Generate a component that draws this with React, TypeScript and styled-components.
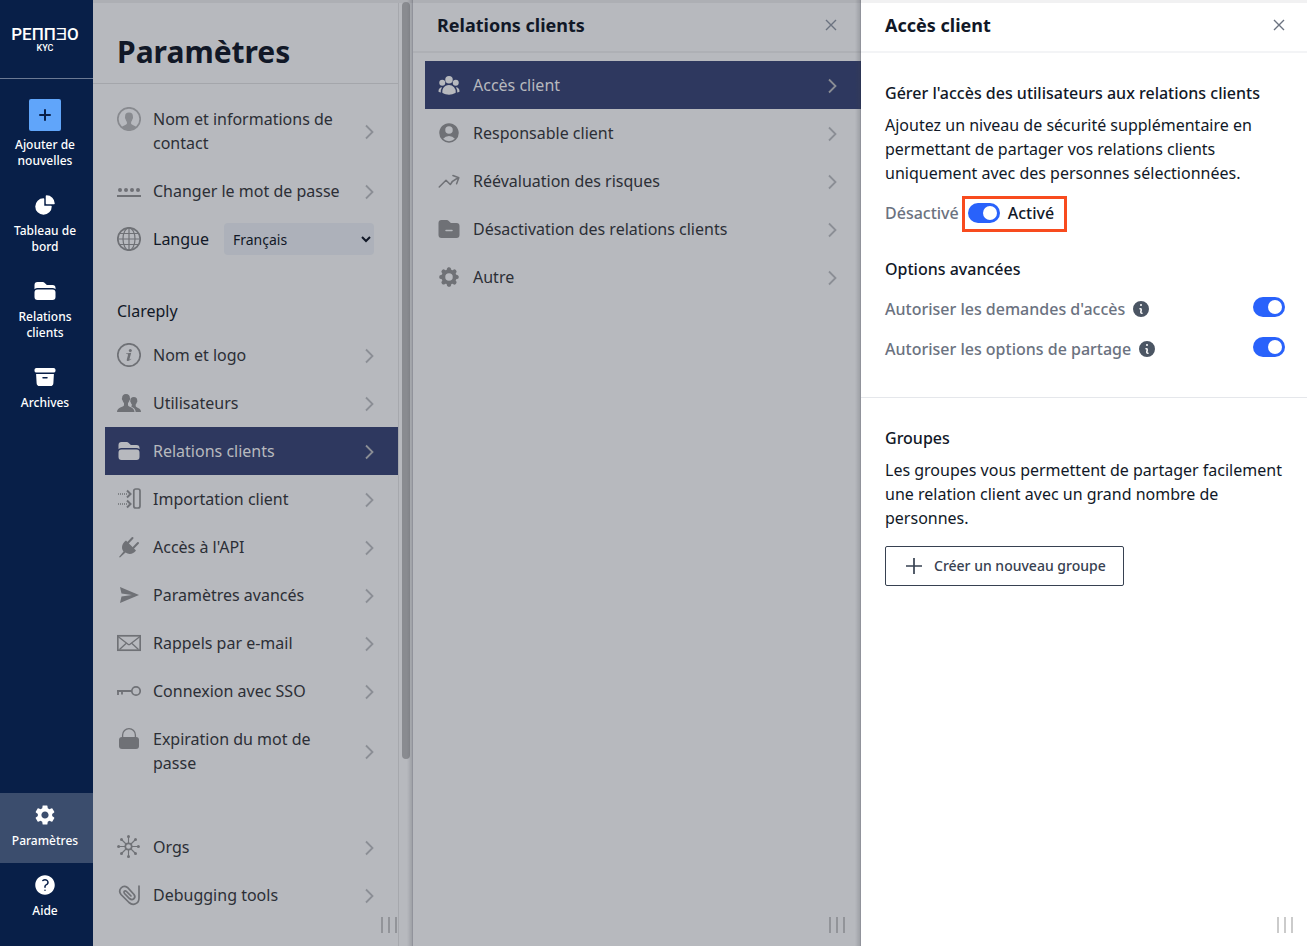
import React from "react";
import styled, { createGlobalStyle, css } from "styled-components";
import {
  HiArchiveBox,
  HiChartPie,
  HiCog8Tooth,
  HiFolder,
  HiFolderMinus,
  HiMiniInformationCircle,
  HiOutlineArrowTrendingUp,
  HiQuestionMarkCircle,
  HiUserCircle,
  HiUserGroup,
} from "react-icons/hi2";
import { MdSettings } from "react-icons/md";

const GlobalStyle = createGlobalStyle`
  *, *::before, *::after { box-sizing: border-box; }
  body { margin: 0; }
  h1, h2, h3, p, ul { margin: 0; padding: 0; }
  ul { list-style: none; }
  button, select, input { font: inherit; color: inherit; }
  body, #root { font-family: "Noto Sans", "Open Sans", sans-serif; font-size: 16px; line-height: 24px; color: #111827; }
`;

const Page = styled.div`
  display: flex;
  min-height: 100vh;
  background: #fff;
`;

/* Navigation bar */

const Sidebar = styled.nav`
  flex: 0 0 93px;
  display: flex;
  flex-direction: column;
  padding-bottom: 13px;
  background: #081f48;
  color: #fff;
`;

const Brand = styled.a`
  display: flex;
  flex-direction: column;
  align-items: center;
  height: 79px;
  padding: 25px 3px 0 0;
  border-bottom: 1px solid #6b7993;
  color: #fff;
  text-decoration: none;
`;

const Wordmark = styled.span`
  font: 500 17px/18px Roboto, sans-serif;
`;

const Product = styled.span`
  font: 500 9px/10px Roboto, sans-serif;
`;

const NavList = styled.ul<{ $end?: boolean }>`
  ${(p) => (p.$end ? "margin-top: auto;" : "padding-top: 8px;")}
`;

const NavLink = styled.a<{ $active?: boolean }>`
  display: flex;
  flex-direction: column;
  align-items: center;
  gap: 6px;
  padding: 10px 7px 14px 4px;
  font-size: 12px;
  line-height: 16px;
  font-weight: 500;
  text-align: center;
  text-decoration: none;
  color: #fff;
  background: ${(p) => (p.$active ? "#3b4d6d" : "transparent")};
`;

const NavIcon = styled.span`
  height: 24px;
  font-size: 24px;
  line-height: 0;
`;

const AddTile = styled.span`
  display: grid;
  place-items: center;
  width: 32px;
  height: 32px;
  margin-top: 2px;
  border-radius: 2px;
  background: #60a5fa;
  color: #081f48;
`;

/* Panels */

const Panel = styled.section<{ $width?: number; $dim?: boolean }>`
  position: relative;
  flex: ${(p) => (p.$width ? `0 0 ${p.$width}px` : "1 1 0")};
  min-width: 0;
  display: flex;
  flex-direction: column;
  border-top: 3px solid ${(p) => (p.$dim ? "#adafb4" : "#f1f1f2")};
  background: ${(p) => (p.$dim ? "#b7b9be" : "#fff")};
  ${(p) =>
    p.$dim &&
    css`
      &::after {
        content: "";
        position: absolute;
        inset: -3px 0 0 auto;
        width: 6px;
        border-right: 1px solid rgba(40, 44, 58, 0.25);
        background: linear-gradient(to right, rgba(60, 62, 70, 0), rgba(60, 62, 70, 0.2));
        pointer-events: none;
      }
    `}
`;

const PanelHeader = styled.header<{ $dim?: boolean }>`
  display: flex;
  align-items: center;
  justify-content: space-between;
  height: 50px;
  padding: 0 ${(p) => (p.$dim ? 24 : 22)}px 4px 24px;
  border-bottom: 2px solid ${(p) => (p.$dim ? "#aeb0b5" : "#f3f4f6")};
`;

const PanelTitle = styled.h2`
  font-size: 18px;
  line-height: 28px;
  font-weight: 700;
`;

const CloseButton = styled.button`
  display: grid;
  place-items: center;
  width: 12px;
  height: 24px;
  padding: 0;
  border: 0;
  background: none;
  color: #6b7280;
`;

const Grip = styled.span<{ $dim?: boolean }>`
  position: absolute;
  right: ${(p) => (p.$dim ? 16 : 14)}px;
  bottom: 13px;
  display: flex;
  gap: 5px;
  i {
    width: 2px;
    height: 16px;
    background: ${(p) => (p.$dim ? "#929499" : "#cbcbcb")};
  }
`;

const SettingsBody = styled.div`
  display: flex;
  flex: 1;
`;

const SettingsContent = styled.div`
  flex: 1;
  min-width: 0;
  border-right: 1px solid #a6a8ad;
`;

const ScrollTrack = styled.div`
  flex: 0 0 14px;
  padding-left: 3px;
`;

const ScrollThumb = styled.div`
  width: 8px;
  height: 80vh;
  margin-top: -1px;
  border-radius: 4px;
  background: #898b90;
`;

const TitleBar = styled.div`
  height: 81px;
  padding: 29px 24px 0;
  border-bottom: 1px solid #a4a6ab;
`;

const PageTitle = styled.h1`
  font-size: 30px;
  line-height: 40px;
  font-weight: 700;
`;

const Menu = styled.ul<{ $top?: number }>`
  padding-top: ${(p) => p.$top ?? 0}px;
`;

const rowLayout = css`
  display: flex;
  gap: 12px;
  margin-left: 12px;
  padding: 12px 24px 12px 12px;
`;

const MenuLink = styled.a<{ $active?: boolean }>`
  ${rowLayout}
  text-decoration: none;
  color: ${(p) => (p.$active ? "#b7b9be" : "#2c2f36")};
  background: ${(p) => (p.$active ? "#2e385f" : "transparent")};
`;

const MenuIcon = styled.span<{ $active?: boolean }>`
  flex: 0 0 24px;
  height: 24px;
  display: grid;
  place-items: center;
  font-size: 24px;
  color: ${(p) => (p.$active ? "#b7b9be" : "#6f7176")};
`;

const MenuLabel = styled.span`
  flex: 1;
  padding-right: 8px;
`;

const Chevron = styled.svg`
  flex: 0 0 9px;
  align-self: center;
  margin-top: 2px;
  color: #8b8e95;
`;

const LanguageRow = styled.div`
  ${rowLayout}
  align-items: center;
  height: 48px;
`;

const LanguageSelect = styled.select`
  width: 150px;
  height: 32px;
  margin-left: auto;
  padding: 0 0 0 5px;
  border: 0;
  border-radius: 4px;
  background: #adb1ba;
  font-size: 14px;
`;

const GroupName = styled.h2`
  padding: 36px 24px 8px;
  font-size: 16px;
  font-weight: 400;
`;

/* Access panel */

const Section = styled.div<{ $top: number; $bottom?: number }>`
  padding: ${(p) => p.$top}px 22px ${(p) => p.$bottom ?? 0}px 24px;
`;

const Divider = styled.hr`
  width: 100%;
  margin: 0;
  border: 0;
  border-top: 1px solid #e5e7eb;
`;

const Subtitle = styled.h3`
  font-size: 16px;
  font-weight: 500;
`;

const Text = styled.p`
  padding-top: 8px;
`;

const SwitchRow = styled.div`
  display: flex;
  align-items: center;
  gap: 3px;
  padding: 11px 0 25px;
`;

const StateOff = styled.span`
  padding-bottom: 2px;
  font-weight: 500;
  color: #6b7280;
`;

const Highlight = styled.label`
  display: flex;
  align-items: center;
  gap: 8px;
  height: 36px;
  padding: 0 10px 2px 3px;
  border: 3px solid #f84b1e;
  font-weight: 500;
`;

const Toggle = styled.input`
  appearance: none;
  flex: 0 0 32px;
  height: 20px;
  margin: 0;
  padding: 3px;
  display: flex;
  justify-content: flex-start;
  border-radius: 10px;
  background: #9ca3af;
  &::before {
    content: "";
    width: 14px;
    height: 14px;
    border-radius: 7px;
    background: #fff;
  }
  &:checked {
    justify-content: flex-end;
    background: #2962fb;
  }
`;

const OptionRow = styled.div`
  display: flex;
  align-items: flex-start;
  padding-top: 16px;
  font-weight: 500;
  color: #6b7280;
`;

const InfoButton = styled.button`
  display: grid;
  place-items: center;
  height: 24px;
  margin: 0 auto 0 6px;
  padding: 0;
  border: 0;
  background: none;
  color: #4b5563;
  font-size: 20px;
`;

const CreateButton = styled.button`
  display: flex;
  align-items: center;
  gap: 12px;
  height: 40px;
  margin-top: 16px;
  padding: 0 17px 0 20px;
  border: 1px solid #374151;
  border-radius: 2px;
  background: #fff;
  color: #374151;
  font-size: 14px;
  line-height: 20px;
  font-weight: 500;
`;

/* Drawings */

const Svg = ({ children, size = 24 }: { children: React.ReactNode; size?: number }) => (
  <svg
    width={size}
    height={size}
    viewBox={`0 0 ${size} ${size}`}
    fill="none"
    stroke="currentColor"
    strokeWidth="1.7"
    aria-hidden="true"
  >
    {children}
  </svg>
);

const PersonIcon = () => (
  <Svg>
    <g opacity="0.65">
      <circle cx="12" cy="12" r="11.2" />
      <path
        stroke="none"
        fill="currentColor"
        d="M12 5.5c-2.7 0-4 1.6-3.900 4 0 .7-.3 1 0 1.800.2.600.400.800.600 1.200.2 1 .6 1.700 1.200 2.400v1.800c-.5 1.300-3.400 1.400-5.200 3.300A11 11 0 0 0 12 23a11 11 0 0 0 7.300-3c-1.800-1.900-4.700-2-5.200-3.300v-1.800c.6-.7 1-1.400 1.200-2.400.2-.4.400-.6.600-1.200.3-.8 0-1.100 0-1.800.1-2.400-1.200-4-3.900-4z"
      />
    </g>
  </Svg>
);

const PasswordIcon = () => (
  <Svg>
    <g fill="currentColor" stroke="none">
      <circle cx="3" cy="11" r="2" />
      <circle cx="9" cy="11" r="2" />
      <circle cx="15" cy="11" r="2" />
      <circle cx="21" cy="11" r="2" />
      <rect y="16" width="24" height="2" />
    </g>
  </Svg>
);

const GlobeIcon = () => (
  <Svg>
    <circle cx="12" cy="12" r="11.200" />
    <ellipse cx="12" cy="12" rx="6" ry="11.200" strokeWidth="1.200" />
    <path strokeWidth="1.200" d="M12 1v22M1 12h22M3 6.500h18M3 17.500h18" />
  </Svg>
);

const InfoIcon = () => (
  <Svg>
    <circle cx="12" cy="12" r="11.200" />
    <g fill="currentColor" stroke="none">
      <circle cx="13.300" cy="7.400" r="1.500" />
      <path d="M9 10.500l5.200-.7-1.700 6.200c-.2.800.3.800 1.500-.3l.4.400c-1.700 2.100-5.200 2.700-4.600.3l1.200-4.400c.2-.8-.3-.9-2-.9z" />
    </g>
  </Svg>
);

const UsersIcon = () => (
  <Svg>
    <g fill="currentColor" stroke="none">
      <path d="M9 3C6.300 3 5 4.700 5.100 7c-.5.300-.2 1.700.4 2.200.3 1.300.8 2 1.500 2.700v2.300C6.500 16.200 0 16 0 21h17.500c0-5-6-4.800-6.500-6.800v-2.300c.7-.7 1.200-1.400 1.500-2.700.6-.5.9-1.900.4-2.200C13 4.700 11.700 3 9 3z" />
      <path d="M16.800 6c2.400 0 3.500 1.500 3.400 3.500.4.300.1 1.400-.3 1.800-.2 1-.7 1.700-1.200 2.300v1.700c.6 1.700 5.300 1.600 5.300 5.700h-5.300c-.2-3-2.200-4.500-4.300-5.300l.5-2.100c-.6-.6-1-1.300-1.200-2.300-.4-.4-.7-1.500-.3-1.800C13.300 7.500 14.400 6 16.800 6z" />
    </g>
  </Svg>
);

const ImportIcon = () => (
  <Svg>
    <rect x="16.800" y="2" width="6.200" height="19" rx="2" />
    <path strokeDasharray="1 1" d="M1 7h10M1 17h10" />
    <path strokeWidth="2" d="M10 3.500L13.500 7 10 10.500M10 13.500l3.500 3.500-3.500 3.500" />
  </Svg>
);

const PlugIcon = () => (
  <Svg>
    <path fill="currentColor" stroke="none" d="M9 5.500l10 10c-2.500 3.500-7 4.500-10.500 2L3 22.500 2 22l4.500-5.500C3.500 12.500 5.500 8 9 5.500z" />
    <path strokeWidth="2" strokeLinecap="round" d="M11 7.800L15.500 3M16.200 13L21 8" />
  </Svg>
);

const SendIcon = () => (
  <Svg>
    <path fill="currentColor" stroke="none" d="M3 4l19 8-19 8 1.500-6.500L15 12 4.500 10.500z" />
  </Svg>
);

const MailIcon = () => (
  <Svg>
    <rect x=".8" y="4.800" width="22.400" height="14.400" />
    <path strokeWidth="1.300" d="M1 5.500l10 7.800q1 .8 2 0l10-7.800M2.500 18.500l6.500-6M21.500 18.500l-6.500-6" />
  </Svg>
);

const KeyIcon = () => (
  <Svg>
    <circle cx="19" cy="12" r="4.200" />
    <path strokeWidth="1.800" d="M14.500 12H0M1 12v4M5 12v3.500" />
  </Svg>
);

const LockIcon = () => (
  <Svg>
    <rect x="2" y="10" width="20" height="12" rx="3" fill="currentColor" stroke="none" />
    <path strokeWidth="1.300" d="M5.600 11V8a6.400 6.400 0 0 1 12.800 0v3" />
  </Svg>
);

const HubIcon = () => (
  <Svg>
    <circle cx="11.500" cy="11.500" r="3.200" />
    <path
      strokeWidth="1.100"
      d="M11.500 8V2M11.500 15v6M8 11.500H2M15 11.500h6M9 9L5 5M14 9l4-4M9 14l-4 4M14 14l4 4"
    />
    <g fill="currentColor" stroke="none">
      <circle cx="11.500" cy="1.600" r="1.500" />
      <circle cx="11.500" cy="21.400" r="1.500" />
      <circle cx="1.600" cy="11.500" r="1.500" />
      <circle cx="21.400" cy="11.500" r="1.500" />
      <circle cx="4.500" cy="4.500" r="1.500" />
      <circle cx="18.500" cy="4.500" r="1.500" />
      <circle cx="4.500" cy="18.500" r="1.500" />
      <circle cx="18.500" cy="18.500" r="1.500" />
    </g>
  </Svg>
);

const ClipIcon = () => (
  <Svg>
    <path
      strokeLinecap="round"
      d="M22 3v12c0 6-6 8-10 4.500L4 11.500C.5 7 5.500 1 10.500 4.500l6.500 7c2.500 3.500-1.500 6.500-4.500 4L7.500 10.500c-1.500-2 .5-3.500 2-2l4.500 4.500"
    />
  </Svg>
);

const CrossIcon = () => (
  <svg width="12" height="12" viewBox="0 0 12 12" stroke="currentColor" strokeWidth="1.400" aria-hidden="true">
    <path d="M1 1l10 10M11 1L1 11" />
  </svg>
);

const AddIcon = () => (
  <svg width="14" height="14" viewBox="0 0 14 14" stroke="currentColor" strokeWidth="2" strokeLinecap="round" aria-hidden="true">
    <path d="M7 2v10M2 7h10" />
  </svg>
);

const RowChevron = () => (
  <Chevron width="9" height="16" viewBox="0 0 9 16" fill="none" stroke="currentColor" strokeWidth="1.800" aria-hidden="true">
    <path d="M1 1.500L7.500 8 1 14.500" />
  </Chevron>
);

/* Data */

type Item = { label: string; icon: React.ReactNode; active?: boolean };

const mainNav: Item[] = [
  { label: "Tableau de bord", icon: <HiChartPie /> },
  { label: "Relations clients", icon: <HiFolder /> },
  { label: "Archives", icon: <HiArchiveBox /> },
];

const endNav: Item[] = [
  { label: "Paramètres", icon: <MdSettings />, active: true },
  { label: "Aide", icon: <HiQuestionMarkCircle /> },
];

const accountItems: Item[] = [
  { label: "Nom et informations de contact", icon: <PersonIcon /> },
  { label: "Changer le mot de passe", icon: <PasswordIcon /> },
];

const companyItems: Item[] = [
  { label: "Nom et logo", icon: <InfoIcon /> },
  { label: "Utilisateurs", icon: <UsersIcon /> },
  { label: "Relations clients", icon: <HiFolder />, active: true },
  { label: "Importation client", icon: <ImportIcon /> },
  { label: "Accès à l'API", icon: <PlugIcon /> },
  { label: "Paramètres avancés", icon: <SendIcon /> },
  { label: "Rappels par e-mail", icon: <MailIcon /> },
  { label: "Connexion avec SSO", icon: <KeyIcon /> },
  { label: "Expiration du mot de passe", icon: <LockIcon /> },
];

const adminItems: Item[] = [
  { label: "Orgs", icon: <HubIcon /> },
  { label: "Debugging tools", icon: <ClipIcon /> },
];

const relationItems: Item[] = [
  { label: "Accès client", icon: <HiUserGroup />, active: true },
  { label: "Responsable client", icon: <HiUserCircle /> },
  { label: "Réévaluation des risques", icon: <HiOutlineArrowTrendingUp /> },
  { label: "Désactivation des relations clients", icon: <HiFolderMinus /> },
  { label: "Autre", icon: <HiCog8Tooth /> },
];

const options = [
  { id: "requests", label: "Autoriser les demandes d'accès" },
  { id: "sharing", label: "Autoriser les options de partage" },
];

const NavItem = ({ label, icon, active }: Item) => (
  <li>
    <NavLink href="#" $active={active}>
      <NavIcon>{icon}</NavIcon>
      {label}
    </NavLink>
  </li>
);

const MenuItems = ({ items, top }: { items: Item[]; top?: number }) => (
  <Menu $top={top}>
    {items.map(({ label, icon, active }) => (
      <li key={label}>
        <MenuLink href="#" $active={active}>
          <MenuIcon $active={active}>{icon}</MenuIcon>
          <MenuLabel>{label}</MenuLabel>
          <RowChevron />
        </MenuLink>
      </li>
    ))}
  </Menu>
);

const PanelGrip = ({ dim }: { dim?: boolean }) => (
  <Grip $dim={dim} aria-hidden="true">
    <i />
    <i />
    <i />
  </Grip>
);

export default function App() {
  return (
    <Page>
      <GlobalStyle />
      <Sidebar>
        <Brand href="#">
          <Wordmark>PEППƎO</Wordmark>
          <Product>KYC</Product>
        </Brand>
        <NavList>
          <li>
            <NavLink href="#">
              <AddTile>
                <AddIcon />
              </AddTile>
              Ajouter de nouvelles
            </NavLink>
          </li>
          {mainNav.map((item) => (
            <NavItem key={item.label} {...item} />
          ))}
        </NavList>
        <NavList $end>
          {endNav.map((item) => (
            <NavItem key={item.label} {...item} />
          ))}
        </NavList>
      </Sidebar>

      <Panel $width={320} $dim>
        <SettingsBody>
          <SettingsContent>
            <TitleBar>
              <PageTitle>Paramètres</PageTitle>
            </TitleBar>
            <MenuItems items={accountItems} top={11} />
            <LanguageRow>
              <MenuIcon>
                <GlobeIcon />
              </MenuIcon>
              <label htmlFor="language">Langue</label>
              <LanguageSelect id="language" defaultValue="fr">
                <option value="fr">Français</option>
              </LanguageSelect>
            </LanguageRow>
            <GroupName>Clareply</GroupName>
            <MenuItems items={companyItems} />
            <MenuItems items={adminItems} top={36} />
          </SettingsContent>
          <ScrollTrack>
            <ScrollThumb />
          </ScrollTrack>
        </SettingsBody>
        <PanelGrip dim />
      </Panel>

      <Panel $width={448} $dim>
        <PanelHeader $dim>
          <PanelTitle>Relations clients</PanelTitle>
          <CloseButton aria-label="Fermer">
            <CrossIcon />
          </CloseButton>
        </PanelHeader>
        <MenuItems items={relationItems} top={8} />
        <PanelGrip dim />
      </Panel>

      <Panel>
        <PanelHeader>
          <PanelTitle>Accès client</PanelTitle>
          <CloseButton aria-label="Fermer">
            <CrossIcon />
          </CloseButton>
        </PanelHeader>
        <Section $top={28} $bottom={36}>
          <Subtitle>Gérer l'accès des utilisateurs aux relations clients</Subtitle>
          <Text>
            Ajoutez un niveau de sécurité supplémentaire en permettant de partager vos relations clients uniquement avec
            des personnes sélectionnées.
          </Text>
          <SwitchRow>
            <StateOff>Désactivé</StateOff>
            <Highlight>
              <Toggle type="checkbox" role="switch" defaultChecked />
              Activé
            </Highlight>
          </SwitchRow>
          <Subtitle>Options avancées</Subtitle>
          {options.map(({ id, label }) => (
            <OptionRow key={id}>
              <label htmlFor={id}>{label}</label>
              <InfoButton aria-label="Informations">
                <HiMiniInformationCircle />
              </InfoButton>
              <Toggle id={id} type="checkbox" role="switch" defaultChecked />
            </OptionRow>
          ))}
        </Section>
        <Divider />
        <Section $top={28} $bottom={36}>
          <Subtitle>Groupes</Subtitle>
          <Text>
            Les groupes vous permettent de partager facilement une relation client avec un grand nombre de personnes.
          </Text>
          <CreateButton>
            <Svg size={16}>
              <path d="M8 0v16M0 8h16" />
            </Svg>
            Créer un nouveau groupe
          </CreateButton>
        </Section>
        <PanelGrip />
      </Panel>
    </Page>
  );
}
